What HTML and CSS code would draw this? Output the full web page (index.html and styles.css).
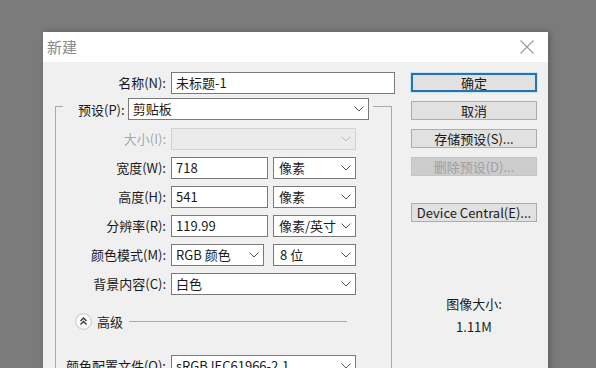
FILE: index.html
```html
<!DOCTYPE html>
<html lang="zh">
<head>
<meta charset="utf-8">
<link rel="stylesheet" href="styles.css">
</head>
<body>
<div class="dialog">
  <div class="titlebar">
    <span class="title">新建</span>
    <svg class="close" width="14" height="14" viewBox="0 0 14 14"><path d="M0.5 0.5 L13.5 13.5 M13.5 0.5 L0.5 13.5" stroke="#9a9a9a" stroke-width="1.1" fill="none"/></svg>
  </div>
  <div class="main">
    <div class="left">
      <div class="row name-row">
        <span class="label">名称(N):</span>
        <div class="field w224">未标题-1</div>
      </div>
      <div class="group">
        <div class="group-head">
          <span class="head-label">预设(P):</span>
          <div class="field select w241">剪贴板<svg class="chev" width="10" height="6" viewBox="0 0 10 6"><polyline points="0.5,0.5 5,5 9.5,0.5" fill="none" stroke="#555" stroke-width="1"/></svg></div>
        </div>
        <div class="rows">
          <div class="row">
            <span class="label disabled">大小(I):</span>
            <div class="field select disabled-field w185"><svg class="chev" width="10" height="6" viewBox="0 0 10 6"><polyline points="0.5,0.5 5,5 9.5,0.5" fill="none" stroke="#bbb" stroke-width="1"/></svg></div>
          </div>
          <div class="row">
            <span class="label">宽度(W):</span>
            <div class="field w97">718</div>
            <div class="field select unit w83">像素<svg class="chev" width="10" height="6" viewBox="0 0 10 6"><polyline points="0.5,0.5 5,5 9.5,0.5" fill="none" stroke="#555" stroke-width="1"/></svg></div>
          </div>
          <div class="row">
            <span class="label">高度(H):</span>
            <div class="field w97">541</div>
            <div class="field select unit w83">像素<svg class="chev" width="10" height="6" viewBox="0 0 10 6"><polyline points="0.5,0.5 5,5 9.5,0.5" fill="none" stroke="#555" stroke-width="1"/></svg></div>
          </div>
          <div class="row">
            <span class="label">分辨率(R):</span>
            <div class="field w97">119.99</div>
            <div class="field select unit w83">像素/英寸<svg class="chev" width="10" height="6" viewBox="0 0 10 6"><polyline points="0.5,0.5 5,5 9.5,0.5" fill="none" stroke="#555" stroke-width="1"/></svg></div>
          </div>
          <div class="row">
            <span class="label">颜色模式(M):</span>
            <div class="field select w93">RGB 颜色<svg class="chev" width="10" height="6" viewBox="0 0 10 6"><polyline points="0.5,0.5 5,5 9.5,0.5" fill="none" stroke="#555" stroke-width="1"/></svg></div>
            <div class="field select unit2 w83">8 位<svg class="chev" width="10" height="6" viewBox="0 0 10 6"><polyline points="0.5,0.5 5,5 9.5,0.5" fill="none" stroke="#555" stroke-width="1"/></svg></div>
          </div>
          <div class="row">
            <span class="label">背景内容(C):</span>
            <div class="field select w185">白色<svg class="chev" width="10" height="6" viewBox="0 0 10 6"><polyline points="0.5,0.5 5,5 9.5,0.5" fill="none" stroke="#555" stroke-width="1"/></svg></div>
          </div>
        </div>
        <div class="advanced">
          <svg class="adv-icon" width="17" height="17" viewBox="0 0 17 17"><circle cx="8.5" cy="8.5" r="7.8" fill="#fafafa" stroke="#c4c4c4" stroke-width="1"/><polyline points="5.5,8 8.5,5 11.5,8" fill="none" stroke="#333" stroke-width="1.4"/><polyline points="5.5,11.5 8.5,8.5 11.5,11.5" fill="none" stroke="#333" stroke-width="1.4"/></svg>
          <span class="adv-text">高级</span>
          <span class="adv-line"></span>
        </div>
        <div class="row profile-row">
          <span class="label">颜色配置文件(O):</span>
          <div class="field select w185">sRGB IEC61966-2.1<svg class="chev" width="10" height="6" viewBox="0 0 10 6"><polyline points="0.5,0.5 5,5 9.5,0.5" fill="none" stroke="#555" stroke-width="1"/></svg></div>
        </div>
      </div>
    </div>
    <div class="right">
      <div class="btn default">确定</div>
      <div class="btn">取消</div>
      <div class="btn">存储预设(S)...</div>
      <div class="btn btn-disabled">删除预设(D)...</div>
      <div class="btn device">Device Central(E)...</div>
      <div class="size-info">
        <div class="size-label">图像大小:</div>
        <div class="size-value">1.11M</div>
      </div>
    </div>
  </div>
</div>
</body>
</html>
```
FILE: styles.css
```css
html, body {
  margin: 0;
  padding: 0;
  height: 100%;
  overflow: hidden;
}
body {
  background: #7b7b7b;
  font-family: "Noto Sans CJK SC", "Noto Sans", sans-serif;
  font-size: 13px;
  color: #1a1a1a;
}
.dialog {
  margin: 32px 0 0 43px;
  width: 505px;
  height: 400px;
  background: #f0f0f0;
  box-shadow: 2px 0 6px rgba(0,0,0,0.25);
}
.titlebar {
  height: 30px;
  background: #ffffff;
  display: flex;
  align-items: center;
  justify-content: space-between;
  padding: 0 14px 0 4px;
}
.title {
  font-size: 15px;
  color: #8a8a8a;
  line-height: 20px;
}
.close { display: block; }
.main {
  display: flex;
}
.left {
  width: 360px;
  padding-top: 10px;
}
.row {
  display: flex;
  align-items: center;
  height: 22px;
}
.label {
  padding-right: 5px;
  text-align: right;
  white-space: nowrap;
  line-height: 22px;
  flex: none;
  box-sizing: border-box;
  width: 128px;
}
.disabled { color: #a8a8a8; }
.field {
  box-sizing: border-box;
  height: 22px;
  border: 1px solid #7a7a7a;
  background: #fff;
  padding-left: 4px;
  line-height: 20px;
  display: flex;
  align-items: center;
  white-space: nowrap;
  flex: none;
}
.select { position: relative; }
.chev {
  margin-left: auto;
  margin-right: 4px;
  flex: none;
}
.disabled-field {
  background: #ebebeb;
  border-color: #d2d2d2;
}
.w224 { width: 224px; }
.w241 { width: 241px; }
.w185 { width: 185px; }
.w97 { width: 97px; }
.w83 { width: 83px; }
.w93 { width: 93px; }
.unit { margin-left: 5px; padding-left: 5px; }
.unit2 { margin-left: 9px; padding-left: 6px; }
.group {
  margin: 12px 0 0 12px;
  width: 337px;
  box-sizing: border-box;
  border: 1px solid #a9a9a9;
  border-bottom: none;
  height: 300px;
}
.group-head {
  display: flex;
  align-items: center;
  margin: -9px 0 0 7px;
  width: fit-content;
  background: #f0f0f0;
  padding: 0 4px 0 15px;
  height: 22px;
}
.head-label {
  margin-right: 3px;
  white-space: nowrap;
}
.rows {
  margin-top: 8px;
  display: flex;
  flex-direction: column;
  gap: 7px;
}
.rows .label, .profile-row .label {
  width: 115px;
}
.advanced {
  display: flex;
  align-items: center;
  height: 17px;
  margin: 18px 44px 0 19px;
}
.adv-icon { display: block; flex: none; }
.adv-text {
  margin-left: 5px;
  line-height: 17px;
}
.adv-line {
  flex: 1;
  height: 1px;
  background: #a9a9a9;
  margin-left: 6px;
}
.profile-row { margin-top: 25px; }
.right {
  margin-left: 8px;
  width: 126px;
  padding-top: 11px;
  display: flex;
  flex-direction: column;
}
.btn {
  box-sizing: border-box;
  height: 19px;
  border: 1px solid #adadad;
  background: #e1e1e1;
  text-align: center;
  line-height: 17px;
  margin-bottom: 9px;
  white-space: nowrap;
}
.btn.default {
  border: 2px solid #2a73a8;
  line-height: 15px;
  box-shadow: 0 0 0 1px #c6e6f6;
}
.btn-disabled {
  background: #cccccc;
  border-color: #c4c4c4;
  color: #a0a0a0;
}
.device { margin-top: 18px; }
.size-info {
  margin-top: 64px;
  text-align: center;
}
.size-label { line-height: 18px; }
.size-value { margin-top: 5px; line-height: 18px; }
```
